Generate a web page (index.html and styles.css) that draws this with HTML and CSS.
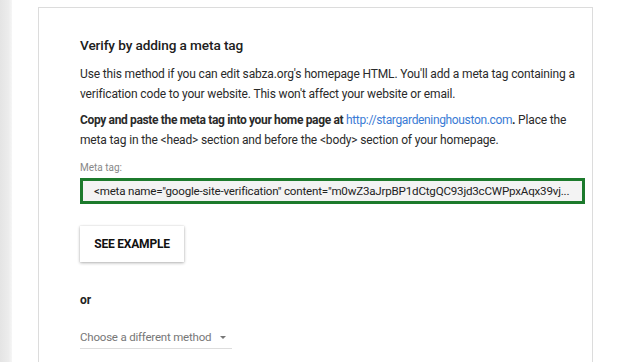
FILE: index.html
```html
<!DOCTYPE html>
<html>
<head>
<meta charset="utf-8">
<link rel="stylesheet" href="styles.css">
</head>
<body>
<div class="page">
  <div class="side"></div>
  <div class="card">
    <h1 class="title">Verify by adding a meta tag</h1>
    <p class="para">Use this method if you can edit sabza.org's homepage HTML. You'll add a meta tag containing a verification code to your website. This won't affect your website or email.</p>
    <p class="para"><b>Copy and paste the meta tag into your home page at</b> <a class="link">http://stargardeninghouston.com</a><b>.</b> Place the meta tag in the &lt;head&gt; section and before the &lt;body&gt; section of your homepage.</p>
    <div class="label">Meta tag:</div>
    <div class="field">&lt;meta name="google-site-verification" content="m0wZ3aJrpBP1dCtgQC93jd3cCWPpxAqx39vj...</div>
    <button class="btn">SEE EXAMPLE</button>
    <div class="or">or</div>
    <div class="select">Choose a different method <span class="caret"></span></div>
  </div>
</div>
</body>
</html>
```
FILE: styles.css
```css
html, body {
  margin: 0;
  padding: 0;
  background: #fff;
}
body {
  font-family: Roboto, "Liberation Sans", sans-serif;
  color: #222;
  width: 621px;
  height: 362px;
  overflow: hidden;
}
.page {
  display: flex;
  height: 362px;
}
.side {
  width: 12px;
  flex: none;
  background: linear-gradient(to right, #e4e4e4, #ececec 70%, #f6f6f6);
}
.card {
  margin: 7px 0 0 26px;
  width: 555px;
  border: 1px solid #dcdcdc;
  border-bottom: none;
  padding: 29px 0 0 41px;
  box-sizing: border-box;
}
.title {
  margin: 0 0 11px;
  font-size: 13.6px;
  line-height: 16px;
  font-weight: 500;
  color: #202020;
  letter-spacing: -0.1px;
}
.para {
  margin: 0 0 6px;
  font-size: 12px;
  line-height: 20px;
  color: #2a2a2a;
  width: 505px;
  letter-spacing: -0.15px;
}
.para b {
  font-weight: 700;
  letter-spacing: -0.35px;
}
.link {
  color: #3a7bd5;
  text-decoration: none;
  letter-spacing: -0.35px;
}
.label {
  margin-top: 12px;
  font-size: 10px;
  line-height: 12px;
  color: #888;
}
.field {
  margin-top: 4px;
  width: 505px;
  height: 26px;
  box-sizing: border-box;
  border: 3px solid #1c7a2c;
  background: #f3f3f3;
  font-size: 11.6px;
  line-height: 20px;
  padding-left: 11px;
  color: #222;
  white-space: nowrap;
  overflow: hidden;
  letter-spacing: -0.2px;
}
.btn {
  display: block;
  margin-top: 22px;
  width: 104px;
  height: 36px;
  border: none;
  background: #fff;
  box-shadow: 0 1px 3px rgba(0,0,0,0.3), 0 0 1px rgba(0,0,0,0.15);
  font-family: Roboto, "Liberation Sans", sans-serif;
  font-weight: 700;
  font-size: 12px;
  color: #111;
  padding: 0;
  letter-spacing: -0.2px;
}
.or {
  margin-top: 31px;
  font-size: 12px;
  line-height: 14px;
  font-weight: 700;
  color: #222;
}
.select {
  margin-top: 23px;
  display: inline-block;
  width: 152px;
  font-size: 11.5px;
  line-height: 14px;
  color: #777;
  border-bottom: 1px solid #ddd;
  padding-bottom: 4px;
  letter-spacing: -0.2px;
}
.caret {
  display: inline-block;
  margin-left: 6px;
  vertical-align: middle;
  border-left: 3px solid transparent;
  border-right: 3px solid transparent;
  border-top: 3px solid #777;
}
```
